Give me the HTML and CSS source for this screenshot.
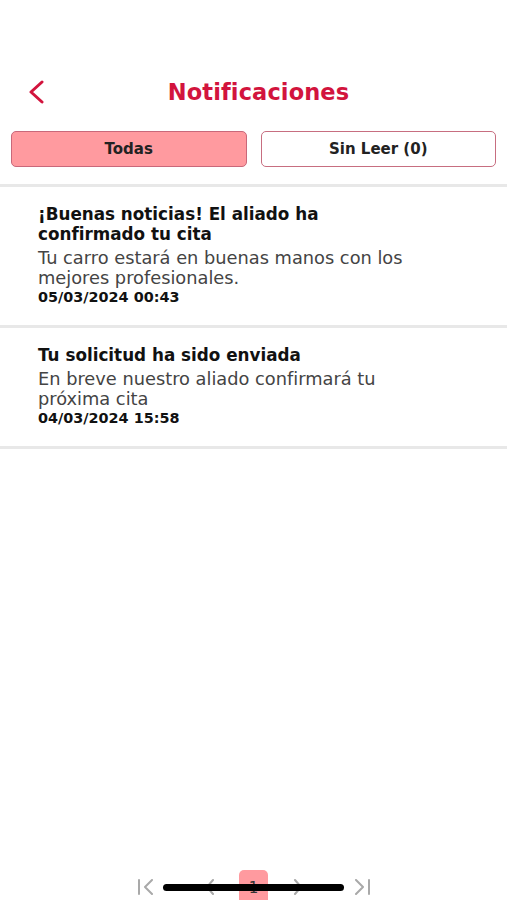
FILE: index.html
```html
<!DOCTYPE html>
<html lang="es">
<head>
    <meta charset="UTF-8">
    <meta name="viewport" content="width=device-width, initial-scale=1.0">
    <title>Notificaciones</title>
    <link rel="stylesheet" href="styles.css">
</head>
<body>
    <div class="page">
        <!-- Header -->
        <header class="header">
            <button class="back" aria-label="Volver">
                <svg width="20" height="24" viewBox="0 0 20 24">
                    <path d="M16 2 L5 12 L16 22" fill="none" stroke="#d2143d" stroke-width="3" stroke-linecap="round" stroke-linejoin="round"/>
                </svg>
            </button>
            <h1 class="title">Notificaciones</h1>
        </header>

        <!-- Tabs -->
        <div class="tabs">
            <button class="tab active">Todas</button>
            <button class="tab">Sin Leer (0)</button>
        </div>

        <!-- Notification list -->
        <ul class="list">
            <li class="item">
                <div class="item-title">¡Buenas noticias! El aliado ha confirmado tu cita</div>
                <div class="item-body">Tu carro estará en buenas manos con los mejores profesionales.</div>
                <div class="item-date">05/03/2024 00:43</div>
            </li>
            <li class="item">
                <div class="item-title">Tu solicitud ha sido enviada</div>
                <div class="item-body">En breve nuestro aliado confirmará tu próxima cita</div>
                <div class="item-date">04/03/2024 15:58</div>
            </li>
        </ul>

        <!-- Pagination -->
        <nav class="pager">
            <span class="pg edge">
                <svg width="18" height="16" viewBox="0 0 18 16">
                    <path d="M2 1 V15 M15 1 L8 8 L15 15" fill="none" stroke="#a9a9a9" stroke-width="2" stroke-linecap="round" stroke-linejoin="round"/>
                </svg>
            </span>
            <span class="pg">
                <svg width="10" height="16" viewBox="0 0 10 16">
                    <path d="M8 1 L2 8 L8 15" fill="none" stroke="#a9a9a9" stroke-width="2" stroke-linecap="round" stroke-linejoin="round"/>
                </svg>
            </span>
            <span class="pg current">1</span>
            <span class="pg">
                <svg width="10" height="16" viewBox="0 0 10 16">
                    <path d="M2 1 L8 8 L2 15" fill="none" stroke="#a9a9a9" stroke-width="2" stroke-linecap="round" stroke-linejoin="round"/>
                </svg>
            </span>
            <span class="pg edge">
                <svg width="18" height="16" viewBox="0 0 18 16">
                    <path d="M3 1 L10 8 L3 15 M16 1 V15" fill="none" stroke="#a9a9a9" stroke-width="2" stroke-linecap="round" stroke-linejoin="round"/>
                </svg>
            </span>
        </nav>
    </div>

    <div class="home-indicator"></div>
</body>
</html>
```

FILE: styles.css
```css
body {
    font-family: "DejaVu Sans", "Liberation Sans", sans-serif;
    margin: 0;
    background-color: #fff;
    color: #111;
}
.page {
    height: 100vh;
    display: flex;
    flex-direction: column;
    overflow: hidden;
}
.header {
    display: flex;
    align-items: center;
    height: 44px;
    margin-top: 70px;
    padding: 0 14px 0 24px;
}
.back {
    background: none;
    border: none;
    padding: 0;
    width: 24px;
    height: 24px;
    cursor: pointer;
}
.title {
    flex: 1;
    margin: 0 0 0 0;
    padding-right: 24px;
    text-align: center;
    font-size: 22.5px;
    font-weight: bold;
    color: #d2143d;
    letter-spacing: 0.1px;
}
.tabs {
    display: flex;
    gap: 14px;
    padding: 0 11px;
    margin-top: 17px;
    margin-bottom: 17px;
}
.tab {
    flex: 1;
    height: 36px;
    border: 1.5px solid #c76e80;
    border-radius: 5px;
    background-color: #fff;
    font-family: inherit;
    font-size: 15px;
    font-weight: bold;
    color: #222;
    cursor: pointer;
}
.tab.active {
    background-color: #ff9a9f;
    border-color: #c9687a;
}
.list {
    list-style-type: none;
    margin: 0;
    padding: 0;
    flex: 1;
    border-top: 3px solid #e8e8e8;
}
.item {
    padding: 17px 38px 18px;
    border-bottom: 3px solid #e8e8e8;
}
.item-title,
.item-body,
.item-date {
    max-width: 385px;
}
.item-title {
    font-size: 16.8px;
    font-weight: bold;
    line-height: 20px;
}
.item-body {
    margin-top: 4px;
    font-size: 17.8px;
    line-height: 19.5px;
    color: #444;
}
.item-date {
    font-size: 14.4px;
    font-weight: bold;
    line-height: 20px;
}
.pager {
    display: flex;
    justify-content: center;
    align-items: flex-start;
    gap: 15px;
    height: 30px;
}
.pg {
    width: 29px;
    height: 34px;
    display: flex;
    align-items: center;
    justify-content: center;
    font-size: 15px;
    color: #333;
}
.pg.edge:first-child {
    margin-right: 20px;
}
.pg.edge:last-child {
    margin-left: 20px;
}
.pg.current {
    height: 40px;
    align-items: flex-start;
    padding-top: 9px;
    box-sizing: border-box;
    background-color: #ff9a9f;
    border-radius: 5px;
}
.home-indicator {
    position: absolute;
    left: 163px;
    top: 884px;
    width: 181px;
    height: 7px;
    border-radius: 4px;
    background-color: #000;
}
```
